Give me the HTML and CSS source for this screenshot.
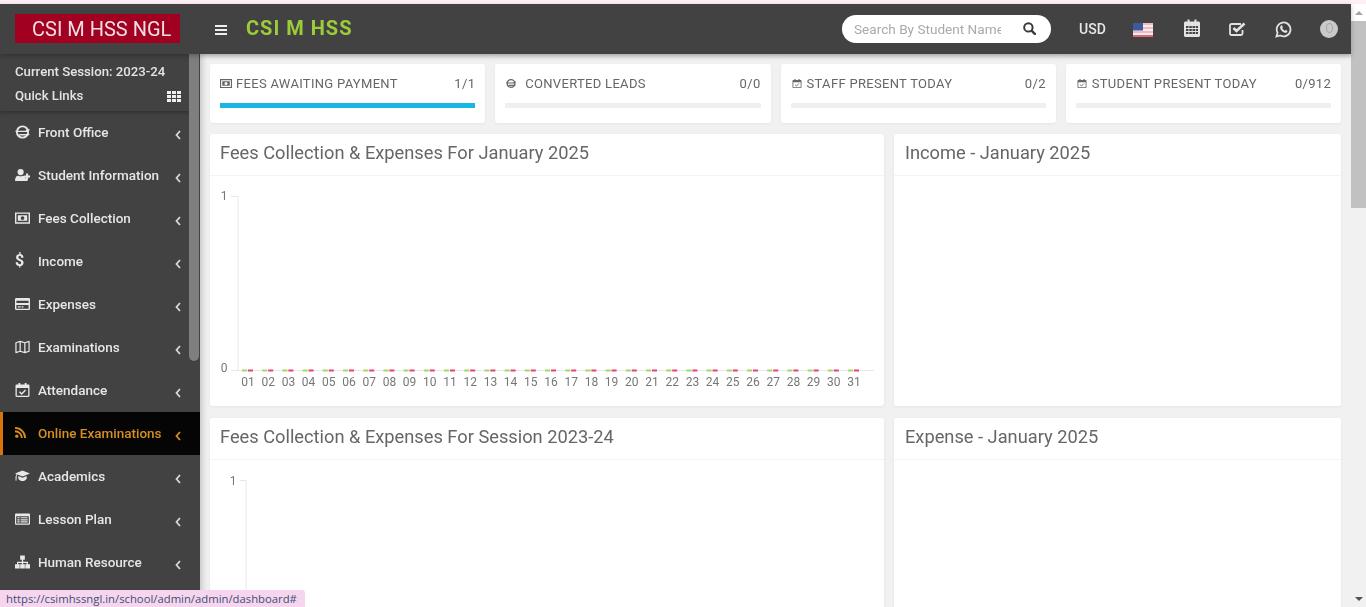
FILE: index.html
```html
<!DOCTYPE html>
<html lang="en">
<head>
<meta charset="utf-8">
<title>CSI M HSS</title>
<link rel="stylesheet" href="styles.css">
</head>
<body>
<svg class="defs" width="0" height="0" aria-hidden="true">
  <symbol id="i-money" viewBox="0 0 16 12"><path fill="currentColor" fill-rule="evenodd" d="M0 0h16v12H0zM1.500 1.500v9h13v-9zM3 3h10v6H3zM8 4a2 2 0 1 0 0 4 2 2 0 0 0 0-4z"/></symbol>
  <symbol id="i-globe" viewBox="0 0 16 14"><circle cx="8" cy="7" r="6" fill="none" stroke="currentColor" stroke-width="2"/><path fill="currentColor" d="M0 5.600h11l2-1.600 3 0-2 3H1zM5 9h11l-2 1.800H3z"/></symbol>
  <symbol id="i-user" viewBox="0 0 16 13"><circle cx="6" cy="3.400" r="3.300" fill="currentColor"/><path fill="currentColor" d="M0 13c0-4 1.600-5.800 3.400-5.800 1.600 1 3.600 1 5.200 0 1 0 1.800.5 2.400 1.300V10h2.400v3zM11.800 5h2.200v2h2v2.200h-2v2h-2.200v-2h-2V7h2z"/></symbol>
  <symbol id="i-card" viewBox="0 0 16 13"><path fill="currentColor" fill-rule="evenodd" d="M1.500 0h13A1.500 1.500 0 0 1 16 1.500v10a1.500 1.500 0 0 1-1.500 1.500h-13A1.500 1.500 0 0 1 0 11.500v-10A1.500 1.500 0 0 1 1.500 0zM1.500 3v2.500h13V3zM1.500 7.500v4h13v-4zM3 9h3v1.200H3zM7 9h2v1.200H7z"/></symbol>
  <symbol id="i-map" viewBox="0 0 16 14"><path fill="none" stroke="currentColor" stroke-width="1.300" stroke-linejoin="round" d="M1 2.500 5.500 1l5 1.500L15 1v10.500L10.500 13l-5-1.500L1 13zM5.500 1v10.500M10.500 2.500V13"/></symbol>
  <symbol id="i-cal" viewBox="0 0 14 14"><path fill="currentColor" fill-rule="evenodd" d="M1.200 1.500H3V0h1.800v1.500h4.400V0H11v1.500h1.800c.7 0 1.200.5 1.200 1.200v10.100c0 .7-.5 1.200-1.200 1.200H1.200C.5 14 0 13.500 0 12.800V2.700c0-.7.500-1.200 1.200-1.200zM1.300 5v7.700h11.400V5z"/><path fill="none" stroke="currentColor" stroke-width="1.400" d="m4 8.800 2.200 2.200L10 7"/></symbol>
  <symbol id="i-rss" viewBox="0 0 12 12"><circle cx="2" cy="10" r="1.800" fill="currentColor"/><path fill="none" stroke="currentColor" stroke-width="2" d="M0 4.600A7.400 7.400 0 0 1 7.400 12M0 1a11 11 0 0 1 11 11"/></symbol>
  <symbol id="i-cap" viewBox="0 0 18 13"><path fill="currentColor" d="M9 0 18 3.600 9 7.200 3 4.800c-.7.800-1 1.700-1.100 2.700.5.500.3 1.200-.1 1.500L2 12H.5l.3-3c-.4-.3-.5-1-.1-1.500C.8 6.300 1.200 5.300 2 4.400L0 3.600zM4 6.500l5 2 5-2v3.300C12.800 11.800 11 12.600 9 12.600s-3.800-.8-5-2.800z"/></symbol>
  <symbol id="i-list" viewBox="0 0 16 12"><path fill="currentColor" fill-rule="evenodd" d="M1 0h14a1 1 0 0 1 1 1v10a1 1 0 0 1-1 1H1a1 1 0 0 1-1-1V1a1 1 0 0 1 1-1zM1.300 3v7.700h13.400V3z"/><path fill="currentColor" d="M2.500 4h2.500v1.300H2.500zM6 4h7.500v1.300H6zM2.500 6.200h2.500v1.300H2.500zM6 6.200h7.500v1.300H6zM2.500 8.400h2.500v1.300H2.500zM6 8.400h7.500v1.300H6z"/></symbol>
  <symbol id="i-site" viewBox="0 0 16 14"><path fill="currentColor" d="M5.500 0h5v4.500H8.700v2.300h5.100v2.700H16V14h-5V9.500h1.400V8.100H8.700v1.400H10.500V14h-5V9.500h1.800V8.100H3.600v1.400H5V14H0V9.500h2.200V6.800h5.100V4.500H5.500z"/></symbol>
  <symbol id="i-grid" viewBox="0 0 14 11"><path fill="currentColor" d="M0 0h4v3H0zM5 0h4v3H5zM10 0h4v3h-4zM0 4h4v3H0zM5 4h4v3H5zM10 4h4v3h-4zM0 8h4v3H0zM5 8h4v3H5zM10 8h4v3h-4z"/></symbol>
  <symbol id="i-angle" viewBox="0 0 6 10"><path fill="none" stroke="currentColor" stroke-width="1.800" d="M5 1 1.500 5 5 9"/></symbol>
  <symbol id="i-search" viewBox="0 0 13 13"><circle cx="5.400" cy="5.400" r="4.200" fill="none" stroke="currentColor" stroke-width="2"/><path stroke="currentColor" stroke-width="2.400" stroke-linecap="round" d="m8.800 8.800 3 3"/></symbol>
  <symbol id="i-calbig" viewBox="0 0 16 18"><path fill="currentColor" fill-rule="evenodd" d="M1.500 2.500H3.500V.5h2v2h5v-2h2v2h2c.8 0 1.500.7 1.500 1.500v12.500c0 .8-.7 1.500-1.500 1.500h-13C.7 18 0 17.300 0 16.500V4c0-.8.700-1.500 1.500-1.500z"/><path fill="#424242" d="M2 7h2.500v2H2zM5.300 7h2.500v2H5.300zM8.500 7H11v2H8.500zM11.700 7H14v2h-2.300zM2 10h2.500v2H2zM5.300 10h2.500v2H5.300zM8.500 10H11v2H8.500zM11.700 10H14v2h-2.300zM2 13h2.500v2H2zM5.300 13h2.500v2H5.300zM8.500 13H11v2H8.500zM11.700 13H14v2h-2.300z"/></symbol>
  <symbol id="i-check" viewBox="0 0 17 14"><path fill="none" stroke="currentColor" stroke-width="1.800" d="M13.500 8v3.500c0 .8-.7 1.500-1.500 1.500H2.500C1.700 13 1 12.300 1 11.500v-8C1 2.700 1.700 2 2.500 2H12"/><path fill="none" stroke="currentColor" stroke-width="2.600" d="m4.500 6 3 3L15.500 1.500"/></symbol>
  <symbol id="i-wa" viewBox="0 0 16 16"><path fill="none" stroke="currentColor" stroke-width="1.700" d="M1.400 14.600 2.400 11A6.500 6.500 0 1 1 5 13.600z"/><path fill="currentColor" d="M5.600 4.400c.5-.4 1-.4 1.200 0l.6 1.400c0 .4-.3.700-.6 1.100.5 1 1.200 1.700 2.300 2.200.4-.3.700-.7 1.100-.7l1.300.7c.3.200.3.700 0 1.200-.6.800-1.700 1-2.800.6C7 10 5.800 8.800 5 7.200c-.4-1.100-.1-2.100.6-2.800z"/></symbol>
</svg>

<div class="screen">
<div class="strip"></div>
<div class="window">
  <div class="main">
    <header class="topbar">
      <div class="logo">CSI M HSS NGL</div>
      <div class="burger"><span></span><span></span><span></span></div>
      <div class="brand">CSI M HSS</div>
      <div class="search">
        <span class="search-text">Search By Student Name</span>
        <svg class="search-icon"><use href="#i-search"/></svg>
      </div>
      <div class="currency">USD</div>
      <svg class="flag" viewBox="0 0 20 14">
        <rect width="20" height="14" fill="#f3b9bd"/>
        <rect y="2" width="20" height="2" fill="#f0eef0"/>
        <rect y="6" width="20" height="2" fill="#f0eef0"/>
        <rect y="10" width="20" height="2" fill="#f0eef0"/>
        <rect y="12" width="20" height="2" fill="#e5636d"/>
        <rect width="10" height="7.500" fill="#3c5a9c"/>
      </svg>
      <svg class="tool tool-cal"><use href="#i-calbig"/></svg>
      <svg class="tool tool-check"><use href="#i-check"/></svg>
      <svg class="tool tool-wa"><use href="#i-wa"/></svg>
      <div class="avatar"><span class="avatar-head"></span></div>
    </header>
    <div class="below">
      <aside class="sidebar">
        <div class="session">
          <div class="session-line">Current Session: 2023-24</div>
          <div class="session-line session-links">Quick Links <svg class="grid-icon"><use href="#i-grid"/></svg></div>
        </div>
        <nav class="menu">
          <a class="item"><svg class="ic"><use href="#i-globe"/></svg><span class="label">Front Office</span><svg class="arrow"><use href="#i-angle"/></svg></a>
          <a class="item"><svg class="ic"><use href="#i-user"/></svg><span class="label">Student Information</span><svg class="arrow"><use href="#i-angle"/></svg></a>
          <a class="item"><svg class="ic"><use href="#i-money"/></svg><span class="label">Fees Collection</span><svg class="arrow"><use href="#i-angle"/></svg></a>
          <a class="item"><span class="ic ic-text">$</span><span class="label">Income</span><svg class="arrow"><use href="#i-angle"/></svg></a>
          <a class="item"><svg class="ic"><use href="#i-card"/></svg><span class="label">Expenses</span><svg class="arrow"><use href="#i-angle"/></svg></a>
          <a class="item"><svg class="ic"><use href="#i-map"/></svg><span class="label">Examinations</span><svg class="arrow"><use href="#i-angle"/></svg></a>
          <a class="item"><svg class="ic"><use href="#i-cal"/></svg><span class="label">Attendance</span><svg class="arrow"><use href="#i-angle"/></svg></a>
          <a class="item active"><svg class="ic ic-rss"><use href="#i-rss"/></svg><span class="label">Online Examinations</span><svg class="arrow"><use href="#i-angle"/></svg></a>
          <a class="item"><svg class="ic"><use href="#i-cap"/></svg><span class="label">Academics</span><svg class="arrow"><use href="#i-angle"/></svg></a>
          <a class="item"><svg class="ic"><use href="#i-list"/></svg><span class="label">Lesson Plan</span><svg class="arrow"><use href="#i-angle"/></svg></a>
          <a class="item"><svg class="ic"><use href="#i-site"/></svg><span class="label">Human Resource</span><svg class="arrow"><use href="#i-angle"/></svg></a>
        </nav>
        <div class="side-thumb"></div>
      </aside>
      <main class="content">
        <section class="stats">
          <div class="stat">
            <div class="stat-row"><svg class="stat-ic"><use href="#i-money"/></svg><span class="stat-name">FEES AWAITING PAYMENT</span><span class="stat-num">1/1</span></div>
            <div class="bar"><div class="bar-fill"></div></div>
          </div>
          <div class="stat">
            <div class="stat-row"><svg class="stat-ic stat-ic-wide"><use href="#i-globe"/></svg><span class="stat-name">CONVERTED LEADS</span><span class="stat-num">0/0</span></div>
            <div class="bar"></div>
          </div>
          <div class="stat">
            <div class="stat-row"><svg class="stat-ic"><use href="#i-cal"/></svg><span class="stat-name">STAFF PRESENT TODAY</span><span class="stat-num">0/2</span></div>
            <div class="bar"></div>
          </div>
          <div class="stat">
            <div class="stat-row"><svg class="stat-ic"><use href="#i-cal"/></svg><span class="stat-name">STUDENT PRESENT TODAY</span><span class="stat-num">0/912</span></div>
            <div class="bar"></div>
          </div>
        </section>
        <section class="panels">
          <article class="panel panel-a">
            <h2 class="panel-title">Fees Collection &amp; Expenses For January 2025</h2>
            <svg class="chart" viewBox="0 0 674 230">
              <g class="axis-lines">
                <path d="M28 20.500v174M21 20.500h7M21 194.500h643"/>
              </g>
              <text class="axis-text" x="14" y="24" text-anchor="middle">1</text>
              <text class="axis-text" x="14" y="196" text-anchor="middle">0</text>
              <line class="dash-green" x1="32" x2="650" y1="194.500" y2="194.500"/>
              <line class="dash-pink" x1="38" x2="650" y1="194.500" y2="194.500"/>
              <g class="day-labels" text-anchor="middle">
                <text x="38" y="210">01</text><text x="58.200" y="210">02</text><text x="78.400" y="210">03</text><text x="98.600" y="210">04</text><text x="118.800" y="210">05</text><text x="139" y="210">06</text><text x="159.200" y="210">07</text><text x="179.400" y="210">08</text><text x="199.600" y="210">09</text><text x="219.800" y="210">10</text><text x="240" y="210">11</text><text x="260.200" y="210">12</text><text x="280.400" y="210">13</text><text x="300.600" y="210">14</text><text x="320.800" y="210">15</text><text x="341" y="210">16</text><text x="361.200" y="210">17</text><text x="381.400" y="210">18</text><text x="401.600" y="210">19</text><text x="421.800" y="210">20</text><text x="442" y="210">21</text><text x="462.200" y="210">22</text><text x="482.400" y="210">23</text><text x="502.600" y="210">24</text><text x="522.800" y="210">25</text><text x="543" y="210">26</text><text x="563.200" y="210">27</text><text x="583.400" y="210">28</text><text x="603.600" y="210">29</text><text x="623.800" y="210">30</text><text x="644" y="210">31</text>
              </g>
            </svg>
          </article>
          <article class="panel panel-b">
            <h2 class="panel-title">Income - January 2025</h2>
          </article>
          <article class="panel panel-tall">
            <h2 class="panel-title">Fees Collection &amp; Expenses For Session 2023-24</h2>
            <svg class="chart" viewBox="0 0 674 230">
              <g class="axis-lines"><path d="M36 20.500V230M30 20.500h6"/></g>
              <text class="axis-text" x="23" y="25" text-anchor="middle">1</text>
            </svg>
          </article>
          <article class="panel panel-tall panel-b">
            <h2 class="panel-title">Expense - January 2025</h2>
          </article>
        </section>
      </main>
    </div>
  </div>
  <div class="scrollbar">
    <div class="scroll-btn"><span class="tri tri-up"></span></div>
    <div class="scroll-thumb"></div>
    <div class="scroll-rest"></div>
    <div class="scroll-btn scroll-btn-low"><span class="tri tri-down"></span></div>
  </div>
</div>
<div class="status">https://csimhssngl.in/school/admin/admin/dashboard#</div>
</div>
</body>
</html>
```
FILE: styles.css
```css
* { box-sizing: border-box; }
html, body { margin: 0; height: 100%; overflow: hidden; }
body {
  background: #f1f1f1;
  font-family: Roboto, "Liberation Sans", sans-serif;
  color: #666;
}
.defs { position: absolute; }
.screen {
  height: 100%;
  display: flex;
  flex-direction: column;
  position: relative;
  overflow: hidden;
  filter: blur(0.55px);
}
.strip { height: 4px; flex: none; background: #fdeff3; }
.window { flex: 1; min-height: 0; display: flex; }
.main { flex: 1; min-width: 0; display: flex; flex-direction: column; }

.topbar {
  height: 50px;
  flex: none;
  background: #424242;
  display: flex;
  align-items: center;
  padding-left: 15px;
  position: relative;
  z-index: 2;
  box-shadow: 0 2px 5px rgba(0, 0, 0, 0.25);
}
.logo {
  width: 165px;
  height: 29px;
  margin-top: -1px;
  background: #a10020;
  color: #f1dfe2;
  font-size: 20px;
  line-height: 30px;
  padding-left: 17px;
  white-space: nowrap;
}
.burger { width: 12px; margin-left: 35px; display: flex; flex-direction: column; gap: 2px; margin-top: 2px; }
.burger span { height: 2px; background: #eee; display: block; }
.brand { margin-left: 19px; color: #9ccc3a; font-size: 20px; font-weight: 700; letter-spacing: 1px; margin-top: -2px; }
.search {
  margin-left: auto;
  width: 209px;
  height: 28px;
  margin-top: -1px;
  background: #fff;
  border-radius: 14px;
  display: flex;
  align-items: center;
  padding-left: 12px;
  position: relative;
}
.search-text { width: 147px; overflow: hidden; white-space: nowrap; font-size: 13.600px; color: #aaa; padding-top: 1px; }
.search-icon { width: 13px; height: 13px; color: #3a3a3a; margin-left: 22px; }
.currency { margin-left: 28px; width: 28px; color: #e6e6e6; font-size: 14px; font-weight: 500; white-space: nowrap; }
.flag { width: 20px; height: 14px; margin-left: 26px; margin-top: 1px; }
.tool { color: #e2e2e2; flex: none; }
.tool-cal { width: 16px; height: 18px; margin-left: 31px; margin-top: -2px; }
.tool-check { width: 17px; height: 14px; margin-left: 29px; }
.tool-wa { width: 17px; height: 17px; margin-left: 29px; margin-top: 1px; }
.avatar {
  width: 18px;
  height: 18px;
  margin-left: 28px;
  margin-right: 13px;
  border-radius: 50%;
  background: #c9c9c9;
  display: flex;
  justify-content: center;
  padding-top: 3px;
  margin-top: -1px;
}
.avatar-head { width: 7px; height: 10px; border-radius: 50%; border: 1px solid #a5a5a5; display: block; }

.below { flex: 1; min-height: 0; display: flex; }
.sidebar {
  width: 200px;
  flex: none;
  background: #424242;
  color: #e4e4e4;
  position: relative;
  overflow: hidden;
}
.session {
  height: 57px;
  padding: 9px 19px 0 15px;
  font-size: 13.200px;
  font-weight: 500;
  background: #424242;
  box-shadow: 0 1px 4px rgba(0, 0, 0, 0.35);
  position: relative;
}
.session-line { line-height: 18px; white-space: nowrap; }
.session-links { display: flex; justify-content: space-between; align-items: center; margin-top: 6px; }
.grid-icon { width: 14px; height: 11px; color: #eee; }
.item {
  height: 43px;
  display: flex;
  align-items: center;
  padding-left: 15px;
  font-size: 13.500px;
  font-weight: 500;
  color: #e6e6e6;
  position: relative;
}
.ic { width: 15px; height: 14px; flex: none; color: #e8e8e8; margin-top: -2px; }
.ic-text { font-size: 16px; font-weight: 700; line-height: 14px; }
.ic-rss { width: 11px; height: 11px; margin-right: 4px; }
.label { margin-left: 8px; white-space: nowrap; margin-top: -2px; }
.arrow { position: absolute; left: 175px; top: 19px; width: 6px; height: 10px; color: #d8d8d8; }
.active {
  background: #050505;
  color: #d68f22;
  border-left: 3px solid #d9730c;
  padding-left: 12px;
}
.active .ic, .active .arrow { color: #d68f22; }
.active .arrow { left: 172px; }
.side-thumb {
  position: absolute;
  top: 0;
  right: 1px;
  width: 10px;
  height: 307px;
  background: #7f7f7f;
  border-radius: 0 0 5px 5px;
}

.content { flex: 1; min-width: 0; padding: 10px 10px 0 10px; box-shadow: inset 6px 4px 6px -4px rgba(0, 0, 0, 0.2); overflow: hidden; }
.stats { display: grid; grid-template-columns: repeat(4, 1fr); gap: 10px; }
.stat { height: 59px; background: #fff; border-radius: 3px; padding: 0 10px; box-shadow: 0 1px 3px rgba(0, 0, 0, 0.05); }
.stat-row { display: flex; align-items: center; height: 39px; font-size: 13px; color: #666; }
.stat-ic { width: 12px; height: 9px; flex: none; color: #666; margin-right: 4px; }
.stat-ic-wide { margin-right: 8px; }
.stat-name { flex: 1; white-space: nowrap; letter-spacing: 0.31px; }
.stat-num { letter-spacing: 0.3px; }
.bar { height: 5px; background: #efefef; border-radius: 1px; }
.bar-fill { height: 100%; background: #17b6e3; }

.panels { display: grid; grid-template-columns: 674px 447px; column-gap: 10px; row-gap: 12px; margin-top: 11px; }
.panel { height: 272px; background: #fff; border-radius: 3px; box-shadow: 0 1px 3px rgba(0, 0, 0, 0.06); }
.panel-tall { height: 300px; }
.panel-title {
  margin: 0;
  height: 42px;
  padding: 0 10px;
  font-size: 18.250px;
  line-height: 38px;
  font-weight: 400;
  color: #666;
  border-bottom: 1px solid #f4f4f4;
  white-space: nowrap;
}
.panel-b .panel-title { padding-left: 11px; }
.chart { display: block; width: 674px; height: 230px; }
.axis-lines path { fill: none; stroke: #e8e8e8; stroke-width: 1; }
.axis-text { font-size: 12px; fill: #777; }
.day-labels text { font-size: 12px; fill: #777; }
.dash-green { stroke: #a9d66a; stroke-width: 2; stroke-dasharray: 5 15.200; }
.dash-pink { stroke: #ec3f74; stroke-width: 2; stroke-dasharray: 5 15.200; }

.scrollbar { width: 15px; flex: none; background: #f1f1f1; display: flex; flex-direction: column; }
.scroll-btn { height: 17px; background: #fff; display: flex; align-items: center; justify-content: center; flex: none; }
.scroll-btn-low { background: #f1f1f1; }
.tri { width: 0; height: 0; border-left: 4px solid transparent; border-right: 4px solid transparent; }
.tri-up { border-bottom: 4px solid #a3a3a3; }
.tri-down { border-top: 4px solid #505050; }
.scroll-thumb { height: 187px; background: #c1c1c1; flex: none; }
.scroll-rest { flex: 1; }

.status {
  position: absolute;
  left: 0;
  bottom: 0;
  height: 17px;
  width: 305px;
  padding-left: 6px;
  background: #f5d6ee;
  border-radius: 0 3px 0 0;
  color: #3f4f72;
  font-family: "Open Sans", "Liberation Sans", sans-serif;
  font-size: 11.300px;
  line-height: 18px;
  white-space: nowrap;
  z-index: 5;
}
```
